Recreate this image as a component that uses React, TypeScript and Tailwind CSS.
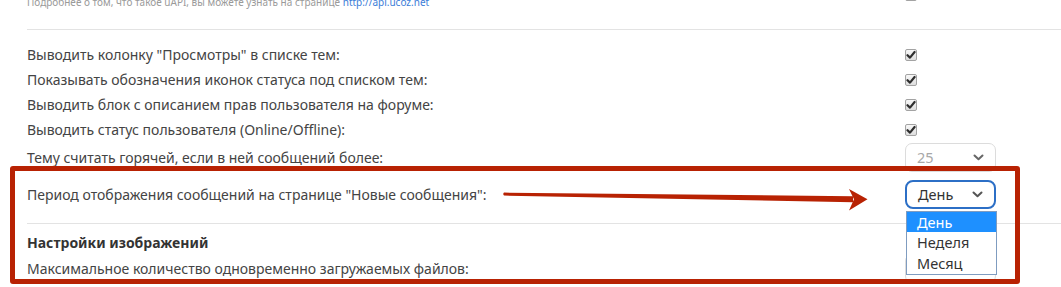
import React from "react";

const FONT = { fontFamily: '"Noto Sans", "Open Sans", sans-serif' };

function Check() {
  return (
    <div className="w-[12px] h-[12px] rounded-[2px] border border-[#a3a3a3] bg-gradient-to-b from-[#f7f7f7] to-[#dedede] flex items-center justify-center">
      <svg width="10" height="10" viewBox="0 0 10 10">
        <path d="M1.5 5.2 L4 7.6 L8.6 2" fill="none" stroke="#2e2e2e" strokeWidth="2.2" strokeLinecap="round" strokeLinejoin="round" />
      </svg>
    </div>
  );
}

function Chevron({ color = "#555" }: { color?: string }) {
  return (
    <svg width="11" height="7" viewBox="0 0 11 7">
      <path d="M1.5 1.5 L5.5 5.3 L9.5 1.5" fill="none" stroke={color} strokeWidth="2" strokeLinecap="round" strokeLinejoin="round" />
    </svg>
  );
}

function Select({ value, focused, muted }: { value: string; focused?: boolean; muted?: boolean }) {
  return (
    <div
      className={
        "w-[91px] h-[29px] flex items-center justify-between pl-[11px] pr-[11px] bg-white " +
        (focused
          ? "border-2 border-[#2c6fc6] rounded-[8px]"
          : "border border-[#dcdcdc] rounded-[7px]")
      }
    >
      <span className={"text-[14.5px] leading-none " + (muted ? "text-[#a8a8a8]" : "text-[#333]")}>{value}</span>
      <Chevron color={muted ? "#666" : "#555"} />
    </div>
  );
}

function Row({ label, children, h = 25, bold }: { label: string; children?: React.ReactNode; h?: number; bold?: boolean }) {
  return (
    <div className="flex items-center" style={{ height: h }}>
      <div className={"flex-1 text-[14px] " + (bold ? "font-bold text-[13.3px] text-[#333]" : "text-[#444]")}>{label}</div>
      <div className="w-[156px] flex items-center">{children}</div>
    </div>
  );
}

export default function App() {
  return (
    <div className="relative w-[1061px] h-[287px] overflow-hidden bg-white" style={FONT}>
      {/* top description */}
      <div className="h-[29px] pl-[27px] flex">
        <div className="flex-1 text-[10px] leading-[10px] text-[#9a9a9a] mt-[-3px]">
          Подробнее о том, что такое uAPI, вы можете узнать на странице{" "}
          <span className="text-[#3b7dd8]">http://api.ucoz.net</span>
        </div>
        <div className="w-[156px] mt-[-11px]">
          <Check />
        </div>
      </div>
      <div className="ml-[27px] h-px bg-[#e3e3e3]" />

      <div className="pl-[27px] pt-[12px]">
        <Row label={'Выводить колонку "Просмотры" в списке тем:'}>
          <Check />
        </Row>
        <Row label="Показывать обозначения иконок статуса под списком тем:">
          <Check />
        </Row>
        <Row label="Выводить блок с описанием прав пользователя на форуме:">
          <Check />
        </Row>
        <Row label="Выводить статус пользователя (Online/Offline):">
          <Check />
        </Row>
        <Row label="Тему считать горячей, если в ней сообщений более:" h={30}>
          <Select value="25" muted />
        </Row>
        <div className="pt-[8px] pb-[14px]">
          <Row label={'Период отображения сообщений на странице "Новые сообщения":'} h={29}>
            <div className="relative">
              <Select value="День" focused />
              <div className="absolute left-[1px] top-[31px] w-[91px] border border-[#7f9cc0] bg-white text-[14.5px] text-[#333] z-20">
                <div className="h-[20px] leading-[20px] pl-[10px] bg-[#1e90ff] text-white">День</div>
                <div className="h-[21px] leading-[21px] pl-[10px]">Неделя</div>
                <div className="h-[21px] leading-[21px] pl-[10px]">Месяц</div>
              </div>
            </div>
          </Row>
        </div>
      </div>
      <div className="ml-[27px] h-px bg-[#e3e3e3]" />
      <div className="pl-[27px] pt-[8px]">
        <Row label="Настройки изображений" h={20} bold />
        <div className="pt-[1px]">
          <Row label="Максимальное количество одновременно загружаемых файлов:" h={30}>
            <Select value="5" />
          </Row>
        </div>
      </div>

      {/* annotation: red frame */}
      <div className="absolute left-[10px] top-[166px] w-[1010px] h-[118px] border-[5px] border-[#b82203] rounded-[3px] z-10 pointer-events-none" />
      {/* annotation: arrow */}
      <svg className="absolute left-0 top-0 z-10 pointer-events-none" width="1061" height="287" viewBox="0 0 1061 287">
        <path d="M504 192.6 Q502.5 194 504 195.6 L853 202.2 L853 196.2 Z" fill="#b82203" />
        <path d="M849 189 L867.5 199.3 L849 210.5 L854 199.3 Z" fill="#b82203" />
      </svg>
    </div>
  );
}
